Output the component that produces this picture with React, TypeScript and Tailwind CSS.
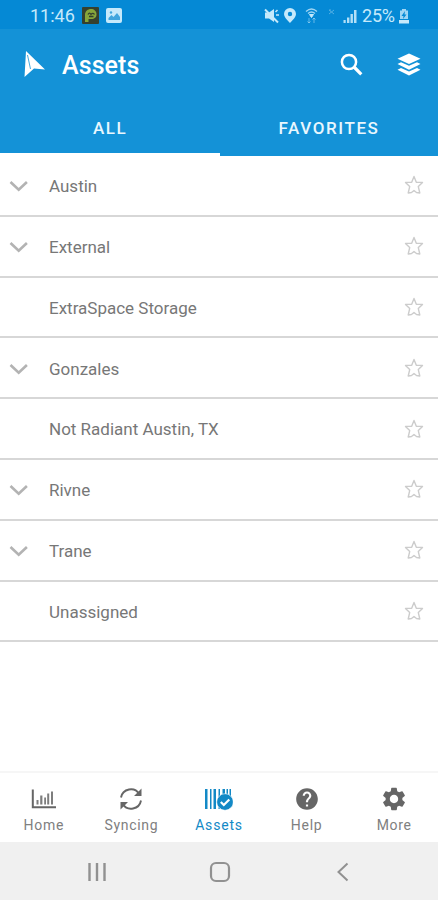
import React from 'react'
import { MdHelp, MdSettings } from 'react-icons/md'


interface AssetLocation {
  name: string;
  expandable: boolean;
}

interface NavItemProps {
  label: string;
  active?: boolean;
  children: React.ReactNode;
}

const locations: AssetLocation[] = [
  { name: 'Austin', expandable: true },
  { name: 'External', expandable: true },
  { name: 'ExtraSpace Storage', expandable: false },
  { name: 'Gonzales', expandable: true },
  { name: 'Not Radiant Austin, TX', expandable: false },
  { name: 'Rivne', expandable: true },
  { name: 'Trane', expandable: true },
  { name: 'Unassigned', expandable: false },
];


const StatusBar: React.FC = () => {
  return (
    <div className="flex h-[29px] shrink-0 items-center bg-[#0589d5] pt-[2px] pl-[30px] text-[#c5e9fb]">
      <span className="w-[45px] pt-[1px] text-[18px] leading-none whitespace-nowrap">11:46</span>
      {/* app notification */}
      <svg className="ml-[7px] h-[17px] w-[17px]" viewBox="0 0 17 17">
        <rect width="17" height="17" rx="1" fill="#35402f" />
        <path d="M3 15V8C3 4 6 2 9 2s5.500 2 5.500 5.300-2 4.700-5 4.700H6.500v3z" fill="#86a63a" />
        <path d="M6 7.500c1-1.800 2-1.800 3 0 1-1.500 2.500-1.500 3.500 0M7 9.500h4.500" stroke="#35402f" strokeWidth="1.300" fill="none" />
      </svg>
      {/* screenshot notification */}
      <svg className="ml-[7px] h-[15px] w-[16px]" viewBox="0 0 16 15">
        <rect width="16" height="15" rx="2" fill="currentColor" />
        <path d="M2.500 12v-2l3-3 2 2 3.500-4 3 4v3z" fill="#3fa5de" />
        <circle cx="5" cy="4.500" r="1.200" fill="#3fa5de" />
      </svg>

      {/* muted */}
      <svg className="ml-[142px] h-[16px] w-[16px]" viewBox="0 0 16 16" fill="currentColor">
        <path d="M1 4.500h4l5-3.500v13L5 10.500H1z" />
        <path d="M11.500 4l2-2M12 7h3" stroke="currentColor" strokeWidth="1.500" />
        <path d="M1 1.500L14 14.500" stroke="currentColor" strokeWidth="2" />
      </svg>
      <svg className="ml-[4px] h-[15px] w-[12px]" viewBox="0 0 12 15" fill="currentColor">
        <path fillRule="evenodd" d="M6 0a6 6 0 0 1 6 6c0 3.500-6 9-6 9S0 9.500 0 6a6 6 0 0 1 6-6zm0 3.800a2.200 2.200 0 1 0 0 4.400 2.200 2.200 0 0 0 0-4.400z" />
      </svg>
      {/* wifi */}
      <svg className="ml-[9px] h-[17px] w-[13px]" viewBox="0 0 13 17" fill="none" stroke="currentColor">
        <path d="M1 4.500Q6.500-.5 12 4.500M3 6.500q3.500-3 7 0" strokeWidth="1.300" opacity=".8" />
        <path d="M4.500 7.500h4l-2 3z" fill="currentColor" />
        <path d="M4 11v5M2.500 14.500L4 16l1.500-1.500M9 16v-5M7.500 12.500L9 11l1.500 1.500" strokeWidth="1" opacity=".5" />
      </svg>
      <svg className="mb-[7px] ml-[10px] h-[6px] w-[7px] opacity-40" viewBox="0 0 7 6" fill="none" stroke="currentColor">
        <path d="M1 1l5 4M6 1L1 5M1 1h2" />
      </svg>
      {/* signal */}
      <svg className="ml-[8px] h-[14px] w-[14px]" viewBox="0 0 14 14" fill="currentColor">
        <path d="M.5 11h2.200v3H.5zM4 8.500h2.400V14H4zM7.500 5h2.400v9H7.500zM11 1h2.500v13H11z" opacity=".9" />
      </svg>
      <span className="ml-[5px] w-[34px] pt-[1px] text-[18px] leading-none tracking-[-0.2px] whitespace-nowrap">25%</span>
      {/* charging battery */}
      <svg className="ml-[2px] h-[16px] w-[12px]" viewBox="0 0 12 16">
        <path d="M4 1h4v1.500h2V11H2V2.500h2z" fill="currentColor" opacity=".8" />
        <path d="M1 12h10v3.500H1z" fill="currentColor" />
        <path d="M7 3L3.500 8h2L5 11l3.500-4.500h-2z" fill="#0589d5" />
      </svg>
    </div>
  )
}


const Header: React.FC = () => {
  return (
    <header className="flex h-[71px] shrink-0 items-center pl-[24px] text-white">
      <svg className="h-[27px] w-[22px]" viewBox="0 0 22 27" fill="currentColor">
        <path d="M2 0L21 18.500 10 17.500.5 26z" />
        <path d="M3.500 4l3 14" stroke="#1492d7" strokeWidth=".8" fill="none" />
      </svg>
      <h1 className="ml-[16px] w-[90px] pt-[2px] text-[25px] leading-none font-medium tracking-[0.1px]">Assets</h1>
      <svg className="ml-[188px] h-[23px] w-[23px]" viewBox="0 0 23 23" fill="none" stroke="currentColor">
        <circle cx="9" cy="9" r="7.100" strokeWidth="2.500" />
        <path d="M14 14l7.300 7.300" strokeWidth="3.200" />
      </svg>
      <svg className="ml-[34px] h-[23px] w-[24px]" viewBox="0 0 24 23" fill="currentColor">
        <path d="M12 .5L23.500 5.800 12 11 .5 5.800z" />
        <path d="M.5 11l3.500-1.800 8 3.600 8-3.600 3.500 1.800L12 16.700z" />
        <path d="M.5 16.700L4 14.900l8 3.600 8-3.600 3.500 1.800L12 22.500z" />
      </svg>
    </header>
  )
}


const Tabs: React.FC = () => {
  return (
    <div className="flex h-[56px] shrink-0 text-[17px] font-medium text-[#e9f7fe]">
      <div className="flex h-full w-[220px] items-center justify-center border-b-[3px] border-white pt-[4px] tracking-[1.5px]">ALL</div>
      <div className="flex h-full flex-1 items-center justify-center pt-[1px] tracking-[1.6px]">FAVORITES</div>
    </div>
  )
}


const LocationRow: React.FC<{ location: AssetLocation }> = ({ location }) => {
  return (
    <li className="flex h-[60.8px] items-center border-b-2 border-[#d7d7d7] pt-[2px] pl-[9px]">
      <div className="w-[40px]">
        {
          location.expandable &&
          <svg className="h-[20px] w-[20px]" viewBox="0 0 20 20" fill="none" stroke="#b3b3b3" strokeWidth="2.6">
            <path d="M1.500 6l8.200 7.800L17.900 6" />
          </svg>
        }
      </div>
      <span className="flex-1 pt-px text-[17px] text-[#777777]">{location.name}</span>
      <svg className="mr-[14px] mb-[2px] h-[20px] w-[20px]" viewBox="0 0 20 20" fill="none" stroke="#cccccc" strokeWidth="1.4" strokeLinejoin="round">
        <path d="M10 1.500l2.300 5.700 6.200.2-4.200 4.200 1.500 6.400-3.300-.5L10 15.500l-2.500 2-3.300.5 1.500-6.400-4.200-4.200 6.200-.2z" />
      </svg>
    </li>
  )
}


const NavItem: React.FC<NavItemProps> = ({ label, active, children }) => {
  return (
    <div className={active ? 'flex flex-1 flex-col items-center text-[#1389c6]' : 'flex flex-1 flex-col items-center text-[#666666]'}>
      <div className="flex h-[26px] items-center">{children}</div>
      <span className={active ? 'mt-[4px] text-[14px] leading-[18px] tracking-[0.8px]' : 'mt-[4px] text-[14px] leading-[18px] tracking-[0.7px] text-[#808080]'}>{label}</span>
    </div>
  )
}


const BottomNav: React.FC = () => {
  return (
    <nav className="flex h-[71px] shrink-0 border-t-2 border-[#f6f6f6] bg-white pt-[13px]">
      <NavItem label="Home">
        <svg className="h-[20px] w-[25px]" viewBox="0 0 25 20" fill="currentColor">
          <path d="M.8.500h2v16.800H25v2H.8z" />
          <path d="M5.500 11h2v4.500h-2zM9.200 6.500h2.200v9H9.200zM13.200 8.500h1.800v7h-1.800zM16.200 4.500h2v11h-2zM20 2.500h2v13h-2z" opacity=".85" />
        </svg>
      </NavItem>
      <NavItem label="Syncing">
        <svg className="h-[24px] w-[24px]" viewBox="0 0 24 24" fill="none" stroke="currentColor" strokeWidth="1.9">
          <path d="M2 10.500A10 10 0 0 1 20.300 7M22 13.500A10 10 0 0 1 3.700 17" />
          <path d="M22.500 1.500v7.500H15zM1.500 22.500V15H9z" fill="currentColor" stroke="none" />
        </svg>
      </NavItem>
      <NavItem label="Assets" active>
        <svg className="h-[23px] w-[28px]" viewBox="0 0 28 23" fill="currentColor">
          <path d="M0 1h2.500v20H0zM5 1h1.500v20H5zM8.500 1H11v20H8.500zM13.500 1H15v20h-1.500zM17.500 1H20v10h-2.500zM21.500 1H23v10h-1.500zM24.500 1H26v10h-1.500z" />
          <circle cx="20" cy="14" r="8.300" stroke="#ffffff" strokeWidth=".6" />
          <path d="M15.800 14l3 3 5.500-5.500" fill="none" stroke="#ffffff" strokeWidth="2.200" />
        </svg>
      </NavItem>
      <NavItem label="Help">
        <MdHelp className="h-[26px] w-[26px]" />
      </NavItem>
      <NavItem label="More">
        <MdSettings className="h-[28px] w-[28px] shrink-0" />
      </NavItem>
    </nav>
  )
}


const SystemBar: React.FC = () => {
  return (
    <div className="flex h-[58px] shrink-0 items-center bg-[#f0f0f0] pt-[1px] pl-[87px] text-[#919191]">
      <svg className="h-[20px] w-[20px]" viewBox="0 0 20 20" fill="currentColor">
        <path d="M1.300 1h2.400v18H1.300zM8.800 1h2.400v18H8.800zM16.300 1h2.400v18h-2.400z" />
      </svg>
      <svg className="ml-[102px] h-[22px] w-[22px]" viewBox="0 0 22 22" fill="none" stroke="currentColor" strokeWidth="2.200">
        <rect x="2" y="2" width="18" height="18" rx="5" />
      </svg>
      <svg className="ml-[105px] h-[20px] w-[14px]" viewBox="0 0 14 20" fill="none" stroke="currentColor" strokeWidth="2">
        <path d="M11.500 1.500L2.500 10l9 8.500" />
      </svg>
    </div>
  )
}


export default function App() {
  return (
    <div className="flex h-[900px] w-[438px] flex-col overflow-hidden bg-white font-['Roboto',sans-serif]">
      <StatusBar />
      <div className="flex shrink-0 flex-col bg-[#1492d7]">
        <Header />
        <Tabs />
      </div>
      {/* one row per location */}
      <ul className="flex-1">
        {
          locations.map((location: AssetLocation, i: number) => {
            return <LocationRow location={location} key={i} />
          })
        }
      </ul>
      <BottomNav />
      <SystemBar />
    </div>
  )
}
